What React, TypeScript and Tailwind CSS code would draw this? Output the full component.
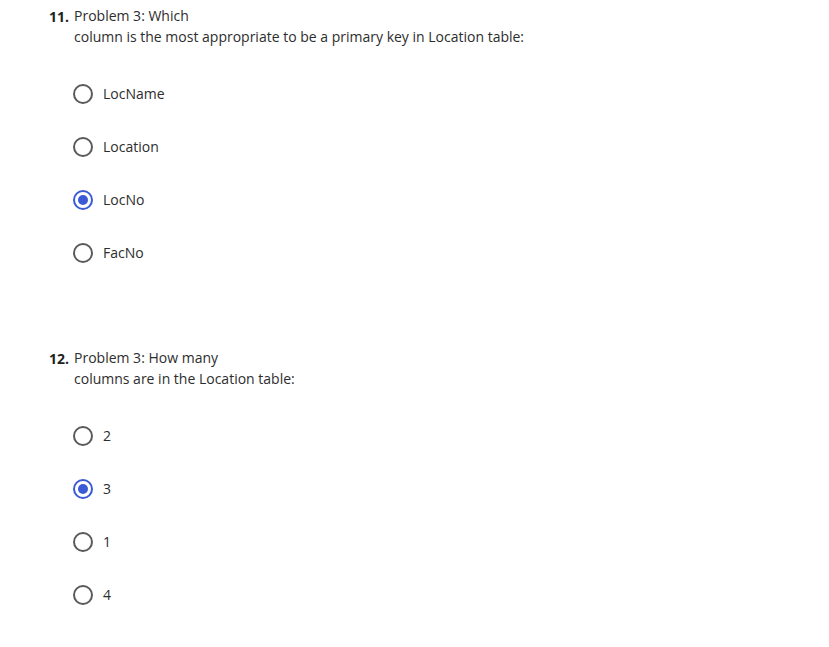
const QUESTIONS = [
  {
    num: "11.",
    first: "Problem 3: Which",
    rest: "column is the most appropriate to be a primary key in Location table:",
    options: ["LocName", "Location", "LocNo", "FacNo"],
    picked: 2,
  },
  {
    num: "12.",
    first: "Problem 3: How many",
    rest: "columns are in the Location table:",
    options: ["2", "3", "1", "4"],
    picked: 1,
  },
];

function Radio({ checked }: { checked: boolean }) {
  if (checked) {
    return (
      <span className="flex h-5 w-5 shrink-0 items-center justify-center rounded-full border-2 border-[#3b5bd6]">
        <span className="h-[10px] w-[10px] rounded-full bg-[#3b5bd6]" />
      </span>
    );
  }
  return <span className="h-5 w-5 shrink-0 rounded-full border-2 border-[#5a5a5a]" />;
}

export default function App() {
  return (
    <div
      className="min-h-[647px] w-full bg-white pt-[5px] text-[14px] leading-[21px] text-[#2d2d2d]"
      style={{ fontFamily: '"Open Sans", "Noto Sans", sans-serif' }}
    >
      {QUESTIONS.map((q, qi) => (
        <div key={q.num} className={qi > 0 ? "mt-[68px]" : ""}>
          <div className="flex pl-[49px]">
            <span className="w-[25px] shrink-0 pt-px font-bold text-[#1f1f1f]">{q.num}</span>
            <div>
              <div>{q.first}</div>
              <div>{q.rest}</div>
            </div>
          </div>
          <div className="mt-[20px] pl-[73px]">
            {q.options.map((opt, i) => (
              <label key={opt} className="flex h-[53px] items-center gap-[10px]">
                <Radio checked={i === q.picked} />
                <span>{opt}</span>
              </label>
            ))}
          </div>
        </div>
      ))}
    </div>
  );
}
